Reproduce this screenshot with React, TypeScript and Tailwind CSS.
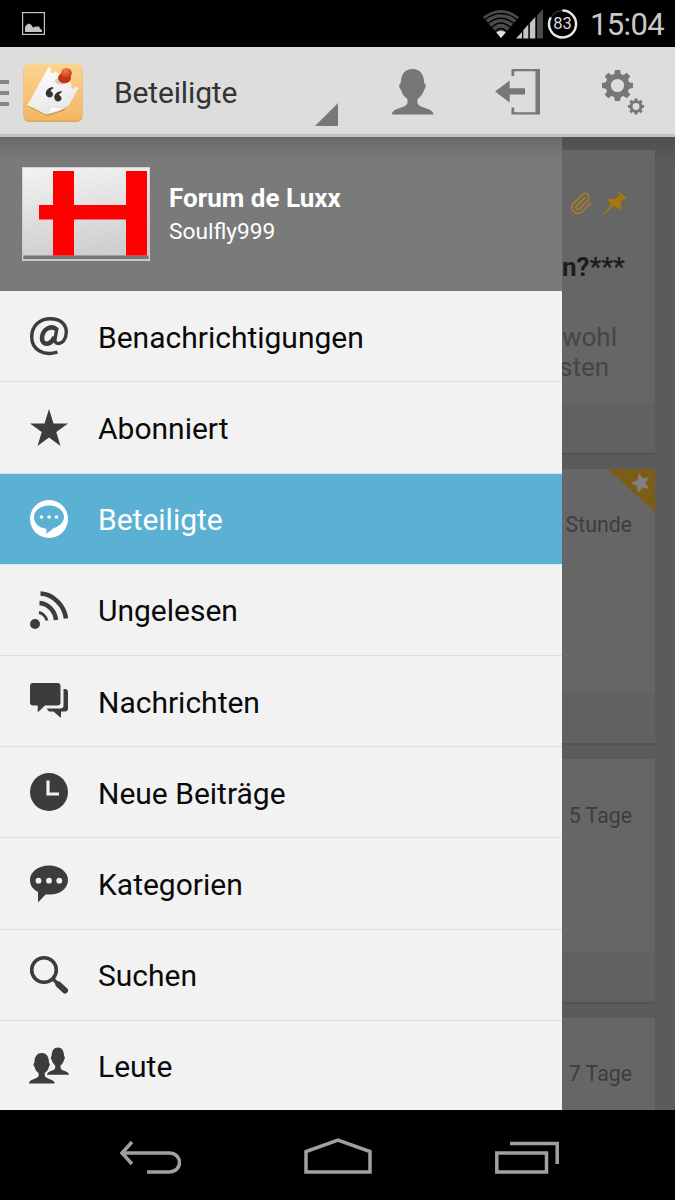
import type { ReactNode } from "react";
import clsx from "clsx";
import { Paperclip } from "lucide-react";

function PersonShape() {
  return (
    <path d="M20.5 0C28 0 32 5 32.3 14.5C34.4 15 34 19 32.2 20.5C31 25 28 28.5 25.5 30V34C27 39.5 41 38.5 41.5 45.5H0C0 38.5 14 39.5 15.5 34V30C13 28.5 10 25 8.8 20.5C6.8 19 6.6 15 8.7 14.5C9 5 13 0 20.5 0Z" />
  );
}

const gearPath =
  "M-2.6-15.5H2.6L3.3-11.6L6-10.5L9.2-12.8L12.8-9.2L10.5-6L11.6-3.3L15.5-2.6V2.6L11.6 3.3L10.5 6L12.8 9.2L9.2 12.8L6 10.5L3.3 11.6L2.6 15.5H-2.6L-3.3 11.6L-6 10.5L-9.2 12.8L-12.8 9.2L-10.5 6L-11.6 3.3L-15.5 2.6V-2.6L-11.6-3.3L-10.5-6L-12.8-9.2L-9.2-12.8L-6-10.5L-3.3-11.6ZM0-6.6A6.6 6.6 0 1 0 0 6.6A6.6 6.6 0 1 0 0-6.6Z";

function StatusBar() {
  return (
    <div className="flex h-[47px] shrink-0 items-center bg-black pr-3 pl-[22px]">
      <svg className="h-[23px] w-[23px]" viewBox="0 0 23 23">
        <rect x="0.6" y="0.6" width="21.8" height="21.8" fill="none" stroke="#c4c4c4" strokeWidth="1.2" />
        <path d="M3 20V15L4.5 13L6.5 11.5L9 12.5L11 15.5L14 14.5H17L18 16.5L20 18V20Z" fill="#c4c4c4" />
      </svg>

      <svg className="ml-auto h-[28px] w-[36px]" viewBox="0 0 36 28">
        <path d="M18 28L0 7Q18-7 36 7Z" fill="#4b4b4b" />
        <g fill="none" stroke="#000" strokeWidth="1.3">
          <path d="M2 9.5Q18-2.5 34 9.5" />
          <path d="M5 13.5Q18 3 31 13.5" />
          <path d="M8.5 17.5Q18 8.5 27.5 17.5" />
          <path d="M12 21.5Q18 15.5 24 21.5" />
        </g>
        <path d="M18 28L13.3 22.5Q18 19 22.7 22.5Z" fill="#dedede" />
      </svg>
      <svg className="-ml-[3px] h-[30px] w-[27px]" viewBox="0 0 27 30">
        <path d="M0 29.5L6 23V29.5ZM7.3 29.5V21L12.3 15.5V29.5ZM13.8 29.5V14L19.3 8V29.5Z" fill="#c6c6c6" />
        <path d="M21 29.5V6.5L27 0V29.5Z" fill="#4b4b4b" />
      </svg>
      <svg className="ml-[4px] h-[30px] w-[31px]" viewBox="0 0 31 30">
        <circle cx="15.5" cy="15" r="13.5" fill="none" stroke="#4b4b4b" strokeWidth="1" />
        <path d="M15.5 1.5A13.5 13.5 0 1 1 3.7 8.5" fill="none" stroke="#e6e6e6" strokeWidth="2.5" />
        <text x="15.5" y="20.2" textAnchor="middle" className="fill-[#d8d8d8] font-[Roboto] text-[16.5px]">83</text>
      </svg>
      <span className="mt-[2px] ml-[12px] w-[73px] text-[31px] leading-none tracking-[-0.02em] whitespace-nowrap text-[#c8c8c8]">15:04</span>
    </div>
  );
}

function AppLogo() {
  return (
    <svg className="h-[60px] w-[60px]" viewBox="0 0 60 60">
      <defs>
        <linearGradient id="tile" x1="0" y1="0" x2="0" y2="1">
          <stop offset="0" stopColor="#fbd491" />
          <stop offset="1" stopColor="#f3b662" />
        </linearGradient>
        <linearGradient id="paper" x1="0" y1="0" x2="0.3" y2="1">
          <stop offset="0" stopColor="#ffffff" />
          <stop offset="1" stopColor="#e9e9e9" />
        </linearGradient>
        <radialGradient id="pin" cx="0.4" cy="0.3" r="0.8">
          <stop offset="0" stopColor="#f07a4c" />
          <stop offset="1" stopColor="#c5300f" />
        </radialGradient>
      </defs>
      <rect x="0.5" y="1" width="59" height="58" rx="6" fill="#dfa558" />
      <rect x="0.5" y="0.5" width="59" height="57" rx="6" fill="url(#tile)" />
      <path d="M4 43L24 53L40 48L47 41L25 45Z" fill="#a26a28" opacity="0.5" />
      <path
        d="M25.5 4L29 6.3A2 2 0 1 0 31.500 8.200L34 9.500L47.500 19.500L49 22A2 2 0 1 0 52 23L55.500 25L45.500 43Q34 46 23 51.500L4 42Q7 38 10 32Z"
        fill="url(#paper)"
      />
      <path d="M23 51.5Q28 48 27.5 43.5Q36 46 45.500 43Q36 49 23 51.5Z" fill="#fafafa" stroke="#cfcfcf" strokeWidth="0.6" />
      <ellipse cx="38" cy="18" rx="6" ry="3.5" fill="#bd8d6e" opacity="0.4" />
      <ellipse cx="41.500" cy="15" rx="6.500" ry="5.200" fill="#c43411" />
      <ellipse cx="43.5" cy="10" rx="5.300" ry="4.800" fill="url(#pin)" />
      <g fill="#333333">
        <path d="M30 24L30.300 25.500C28.300 26.200 27.500 27.200 27.700 28.200C29.800 29 30.600 31 29.600 32.800C28.500 34.800 25.800 35 24.100 33.400C21 30.300 23.500 24.500 30 24Z" />
        <path d="M38.500 28L38.800 29.500C36.800 30.200 36 31.200 36.200 32.200C38.300 33 39.100 35 38.100 36.800C37 38.800 34.300 39 32.600 37.400C29.500 34.300 32 28.500 38.500 28Z" />
      </g>
    </svg>
  );
}

function ActionBar() {
  return (
    <div className="flex h-[90px] shrink-0 border-b-[3px] border-[#c3c3c3] bg-[#dddddd] fill-[#777777]">
      <div className="mt-[33px] flex w-[9px] flex-col gap-[7px]">
        <div className="h-1 bg-[#858585]" />
        <div className="h-1 bg-[#858585]" />
        <div className="h-1 bg-[#858585]" />
      </div>
      <div className="mt-4 ml-[14px]">
        <AppLogo />
      </div>
      <div className="ml-[31px] flex w-[224px]">
        <span className="mt-[26px] text-[30px] leading-[40px] tracking-[-0.005em] text-[#333333]">Beteiligte</span>
        <svg className="mt-[56px] ml-auto h-[23px] w-[23px]" viewBox="0 0 23 23">
          <path d="M23 0V23H0Z" />
        </svg>
      </div>
      <svg className="mt-[22px] ml-[54px] h-[46px] w-[42px]" viewBox="0 0 42 46">
        <PersonShape />
      </svg>
      <svg className="mt-[22px] ml-[61px] h-[46px] w-[46px]" viewBox="0 0 46 46">
        <path d="M16.5 0H45V45.5H16.5V38.5H19.2V43.3H40.5V2.2H19.2V7H16.5ZM0 22.5L14.7 11.5V19.3H30V25.5H14.7V33.5Z" />
      </svg>
      <svg className="mt-[22px] ml-[60px] h-[46px] w-[44px]" viewBox="0 0 44 46">
        <path transform="translate(16.5 16.5)" fillRule="evenodd" d={gearPath} />
        <path transform="translate(35 37.5) scale(0.52)" fillRule="evenodd" d={gearPath} />
      </svg>
    </div>
  );
}

function ForumLogo() {
  return (
    <svg className="h-[94px] w-[128px]" viewBox="0 0 128 94">
      <defs>
        <linearGradient id="plate" x1="0.3" y1="0" x2="0.5" y2="1">
          <stop offset="0" stopColor="#f1f1f1" />
          <stop offset="1" stopColor="#cecece" />
        </linearGradient>
      </defs>
      <rect width="128" height="94" fill="#c9c9c9" />
      <rect x="0.7" y="0.7" width="126.6" height="87.3" fill="url(#plate)" />
      <rect x="1.5" y="88.5" width="125" height="3.5" fill="#777777" />
      <path d="M31 4H52V38H104V4H125V88.5H104V52.5H52V88.5H31V52.5H17V38H31Z" fill="#fe0000" />
    </svg>
  );
}

type Entry = { label: string; icon: ReactNode; active?: boolean };

const entries: Entry[] = [
  {
    label: "Benachrichtigungen",
    icon: (
      <g fill="none" stroke="currentColor">
        <path d="M27.5 35C14 39.5 1.7 33 1.7 20C1.7 8.5 10 1.7 20.5 1.7C30 1.7 36.3 7 36.3 15C36.3 22 32.5 26.5 28.5 26.5C25 26.5 24.5 24.5 25.2 21L27 10.5" strokeWidth="3.4" />
        <path d="M26 12C21 8 12.5 12 12 21C11.7 28.5 20.5 29 24.5 20" strokeWidth="4.6" />
      </g>
    ),
  },
  {
    label: "Abonniert",
    icon: <path d="M19 0L23.5 14.5H38L26.3 23L30.5 37L19 28.5L7.5 37L11.7 23L0 14.5H14.5Z" />,
  },
  {
    label: "Beteiligte",
    active: true,
    icon: (
      <>
        <circle cx="19" cy="19" r="19" />
        <path className="fill-[#5bb1d3]" d="M19 5.5C27.5 5.5 34 10.5 34 17C34 22 29.5 26 24 28L16 34C17 31.5 16.8 29.5 15.5 28.5C8.5 27.5 4 23 4 17C4 10.5 10.5 5.5 19 5.5Z" />
        <circle cx="11.5" cy="17" r="1.8" />
        <circle cx="19" cy="17" r="1.8" />
        <circle cx="26.5" cy="17" r="1.8" />
      </>
    ),
  },
  {
    label: "Ungelesen",
    icon: (
      <>
        <circle cx="5" cy="33" r="5" />
        <g fill="none" stroke="currentColor">
          <path d="M10.5 2.5C23 3 34.5 14.5 36 27.5" strokeWidth="4.5" />
          <path d="M9.5 12C18 12.5 25 20 26 29" strokeWidth="4.5" />
          <path d="M9 21.5C12.5 22 16 25.5 17 29.5" strokeWidth="2.8" />
        </g>
      </>
    ),
  },
  {
    label: "Nachrichten",
    icon: (
      <path d="M3 1H27.5Q30.5 1 30.5 4V20.5Q30.5 23.5 27.5 23.5H15L7.7 30.5V23.5H3Q0 23.5 0 20.5V4Q0 1 3 1ZM33.5 7H35Q38 7 38 10V26.5Q38 29.5 35 29.5H31V36L23.5 29.5H19L16.5 26.5H30.5Q33.5 26.5 33.5 23.5Z" />
    ),
  },
  {
    label: "Neue Beiträge",
    icon: (
      <>
        <circle cx="19" cy="19" r="19" />
        <path d="M18 7.5V21H29" fill="none" stroke="#f2f2f2" strokeWidth="3.2" />
      </>
    ),
  },
  {
    label: "Kategorien",
    icon: (
      <>
        <path d="M19 0.5C30 0.5 38 7 38 15C38 23.5 30 29.5 20 29.5H15.5L8 37.5V27C3 24.5 0 20.5 0 15C0 7 8 0.5 19 0.5Z" />
        <g fill="#f2f2f2">
          <circle cx="8.5" cy="15.7" r="2.9" />
          <circle cx="19" cy="15.7" r="2.9" />
          <circle cx="29.3" cy="15.7" r="2.9" />
        </g>
      </>
    ),
  },
  {
    label: "Suchen",
    icon: (
      <g fill="none" stroke="currentColor">
        <circle cx="14" cy="14" r="12.3" strokeWidth="3.6" />
        <path d="M23 23L28 28" strokeWidth="3.6" />
        <path d="M28.5 28.5L35 34.5" strokeWidth="6" strokeLinecap="round" />
      </g>
    ),
  },
  {
    label: "Leute",
    icon: (
      <>
        <g transform="translate(17 0.5) scale(0.53 0.6)">
          <PersonShape />
        </g>
        <g className="stroke-[#f2f2f2] stroke-[3px] [paint-order:stroke]" transform="translate(-1 6) scale(0.62 0.67)">
          <PersonShape />
        </g>
      </>
    ),
  },
];

function Drawer() {
  return (
    <div className="relative z-10 flex w-[562px] shrink-0 flex-col overflow-hidden">
      <div className="flex h-[154.3px] shrink-0 bg-[#7a7a7a] bg-linear-to-b from-[#696969] to-[#7a7a7a] to-15% pt-[30px] pl-[22px] text-white">
        <ForumLogo />
        <div className="ml-[19px]">
          <div className="mt-[13px] text-[26px] leading-9 font-bold">Forum de Luxx</div>
          <div className="mt-px text-[22.7px] leading-[30px]">Soulfly999</div>
        </div>
      </div>
      {entries.map(({ label, icon, active }) => (
        <div
          key={label}
          className={clsx(
            "flex h-[91.2px] shrink-0 items-center border-b pl-[30px]",
            active ? "border-[#d9e9f4] bg-[#5bb1d3] text-white" : "border-[#dedede] bg-[#f2f2f2] text-[#3c3c3c]"
          )}
        >
          <svg className="h-[38px] w-[38px] overflow-visible" viewBox="0 0 38 38" fill="currentColor">
            {icon}
          </svg>
          <span className={clsx("ml-[30px] pt-[3px] text-[30px] leading-none", !active && "text-[#0a0a0a]")}>{label}</span>
        </div>
      ))}
    </div>
  );
}

function Card({ className, children }: { className: string; children: ReactNode }) {
  return (
    <div className={clsx("flex w-[93px] shrink-0 flex-col border-b-2 border-[#535353] bg-[#666666]", className)}>
      {children}
      <div className="mt-auto h-[50px] shrink-0 bg-[#616161]" />
    </div>
  );
}

function Threads() {
  return (
    <div className="flex min-w-0 flex-1 flex-col gap-[14px] bg-[#5b5b5b] bg-linear-to-b from-[#505050] to-[#5b5b5b] to-3% pt-[13px] whitespace-nowrap">
      <Card className="h-[305px]">
        <div className="mt-[41px] flex gap-[10px] pl-[7px]">
          <Paperclip className="h-[25px] w-[24px]" color="#a07c2c" strokeWidth={1.9} />
          <svg className="h-[25px] w-[25px]" viewBox="0 0 25 25" fill="#a8780f">
            <path d="M15.5 0.5L24 7L22 8.5L20 8L17.5 12L18.5 17L16.5 18.5L11 14.7L1 23.5L0.5 23L8.5 12.7L4.5 9L6.5 7.5L12 8L16.5 4.5Z" />
          </svg>
        </div>
        <div className="mt-[33px] text-[26px] leading-9 font-bold text-[#1c1c1c]">n?***</div>
        <div className="mt-[37px] text-[26px] leading-[30px] text-[#454545]">
          <div>wohl</div>
          <div className="-ml-[3px]">sten</div>
        </div>
      </Card>
      <Card className="relative h-[276px]">
        <svg className="absolute top-0 right-0 h-[43px] w-[47px]" viewBox="0 0 47 43">
          <path d="M0 0H47V43Z" fill="#7c5d17" />
          <path d="M31 4L34.5 9L41 8.5L37.5 14L41 20L34.5 18.5L30 24L29 17L23 14L29.5 11Z" fill="#808080" />
        </svg>
        <div className="mt-[41px] pr-[23px] text-right text-[21.3px] leading-[30px] text-[#3d3d3d]">Stunde</div>
      </Card>
      <Card className="h-[245px]">
        <div className="mt-[42px] pr-[23px] text-right text-[21.3px] leading-[30px] text-[#3d3d3d]">5 Tage</div>
      </Card>
      <Card className="h-[245px]">
        <div className="mt-[41px] pr-[23px] text-right text-[21.3px] leading-[30px] text-[#3d3d3d]">7 Tage</div>
      </Card>
    </div>
  );
}

function NavigationBar() {
  return (
    <div className="flex h-[90px] shrink-0 justify-between bg-black pt-[28px] pr-[116px] pl-[119px]">
      <svg className="h-9 w-[62px]" viewBox="0 0 62 36" fill="none" stroke="#a0a0a0" strokeWidth="3.5">
        <path d="M2 15H50C64 15 64 34 50 34H28" />
        <path d="M13 4L3 15L13 26" />
      </svg>
      <svg className="h-9 w-[68px]" viewBox="0 0 68 36" fill="none" stroke="#a0a0a0" strokeWidth="3.5">
        <path d="M2 34V13.5L34 2L66 13.5V34Z" />
      </svg>
      <svg className="h-9 w-[64px]" viewBox="0 0 64 36" fill="none" stroke="#a0a0a0" strokeWidth="3.5">
        <path d="M1.8 15H51.5V34H1.8ZM15 5.5H62.2V26" />
      </svg>
    </div>
  );
}

export default function App() {
  return (
    <div className="flex h-[1200px] w-[675px] flex-col overflow-hidden font-[Roboto,sans-serif]">
      <StatusBar />
      <ActionBar />
      <div className="flex min-h-0 flex-1 overflow-hidden">
        <Drawer />
        <Threads />
      </div>
      <NavigationBar />
    </div>
  );
}
